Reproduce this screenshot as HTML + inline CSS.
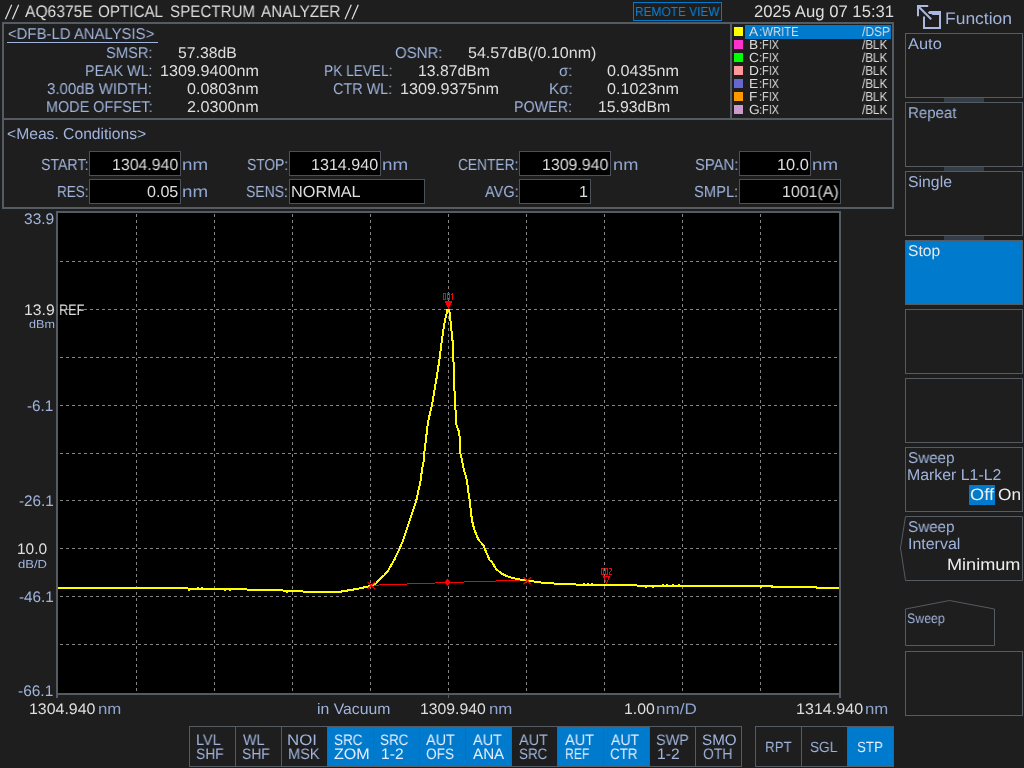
<!DOCTYPE html>
<html><head><meta charset="utf-8"><title>AQ6375E OPTICAL SPECTRUM ANALYZER</title>
<style>
html,body{margin:0;padding:0;background:#1e1e1e;}
body{width:1024px;height:768px;position:relative;overflow:hidden;font-family:"Liberation Sans",sans-serif;}
.t{will-change:transform;text-rendering:geometricPrecision;position:absolute;white-space:pre;line-height:1;transform-origin:0 0;}
.r{position:absolute;}
</style></head><body>
<div class="t" style="left:24.60px;top:4px;font-size:16.7px;color:#dedede;transform:scaleX(0.9355)">AQ6375E</div>
<div class="t" style="left:97.72px;top:4px;font-size:16.7px;color:#dedede;transform:scaleX(0.9114)">OPTICAL</div>
<div class="t" style="left:170.32px;top:4px;font-size:16.7px;color:#dedede;transform:scaleX(0.9075)">SPECTRUM</div>
<div class="t" style="left:260.80px;top:4px;font-size:16.7px;color:#dedede;transform:scaleX(0.9136)">ANALYZER</div>
<div class="r" style="left:633px;top:2px;width:89px;height:19px;border:1px solid #007acc;box-sizing:border-box;"></div>
<div class="t" style="left:635.05px;top:5px;font-size:13px;color:#0a84dc;transform:scaleX(0.9141)">REMOTE VIEW</div>
<div class="t" style="left:753.87px;top:4px;font-size:16.7px;color:#dedede;transform:scaleX(0.9970)">2025 Aug 07 15:31</div>
<div class="r" style="left:2px;top:22px;width:892px;height:187px;border:2px solid #555b63;box-sizing:border-box;"></div>
<div class="r" style="left:2px;top:118px;width:892px;height:2px;background:#555b63;"></div>
<div class="r" style="left:730px;top:22px;width:2px;height:97px;background:#555b63;"></div>
<div class="t" style="left:8.28px;top:27px;font-size:15.6px;color:#a0b4dc;transform:scaleX(0.9556)">&lt;DFB-LD ANALYSIS&gt;</div>
<div class="r" style="left:7px;top:42px;width:151px;height:1px;background:#a0b4dc;"></div>
<div class="t" style="left:105.64px;top:46px;font-size:15.6px;color:#a0b4dc;transform:scaleX(0.9420)">SMSR:</div>
<div class="t" style="left:84.66px;top:64px;font-size:15.6px;color:#a0b4dc;transform:scaleX(0.9162)">PEAK WL:</div>
<div class="t" style="left:47.18px;top:82px;font-size:15.6px;color:#a0b4dc;transform:scaleX(0.9615)">3.00dB WIDTH:</div>
<div class="t" style="left:45.55px;top:100px;font-size:15.6px;color:#a0b4dc;transform:scaleX(0.9251)">MODE OFFSET:</div>
<div class="t" style="left:178.07px;top:46px;font-size:15.6px;color:#dedede;transform:scaleX(1.0122)">57.38dB</div>
<div class="t" style="left:159.69px;top:64px;font-size:15.6px;color:#dedede;transform:scaleX(1.0366)">1309.9400nm</div>
<div class="t" style="left:187.04px;top:82px;font-size:15.6px;color:#dedede;transform:scaleX(1.0315)">0.0803nm</div>
<div class="t" style="left:186.79px;top:100px;font-size:15.6px;color:#dedede;transform:scaleX(1.0351)">2.0300nm</div>
<div class="t" style="left:394.92px;top:46px;font-size:15.6px;color:#a0b4dc;transform:scaleX(0.9621)">OSNR:</div>
<div class="t" style="left:468.16px;top:46px;font-size:15.6px;color:#dedede;transform:scaleX(1.0282)">54.57dB(/0.10nm)</div>
<div class="t" style="left:323.71px;top:64px;font-size:15.6px;color:#a0b4dc;transform:scaleX(0.8764)">PK LEVEL:</div>
<div class="t" style="left:418.42px;top:64px;font-size:15.6px;color:#dedede;transform:scaleX(1.0094)">13.87dBm</div>
<div class="t" style="left:332.88px;top:82px;font-size:15.6px;color:#a0b4dc;transform:scaleX(0.9240)">CTR WL:</div>
<div class="t" style="left:400.39px;top:82px;font-size:15.6px;color:#dedede;transform:scaleX(1.0376)">1309.9375nm</div>
<div class="t" style="left:559.40px;top:64px;font-size:15.6px;color:#a0b4dc;transform:scaleX(0.9553)">σ:</div>
<div class="t" style="left:607.03px;top:64px;font-size:15.6px;color:#dedede;transform:scaleX(1.0374)">0.0435nm</div>
<div class="t" style="left:548.98px;top:82px;font-size:15.6px;color:#a0b4dc;transform:scaleX(0.9742)">Kσ:</div>
<div class="t" style="left:607.03px;top:82px;font-size:15.6px;color:#dedede;transform:scaleX(1.0360)">0.1023nm</div>
<div class="t" style="left:513.86px;top:100px;font-size:15.6px;color:#a0b4dc;transform:scaleX(0.9162)">POWER:</div>
<div class="t" style="left:597.81px;top:100px;font-size:15.6px;color:#dedede;transform:scaleX(1.0152)">15.93dBm</div>
<div class="r" style="left:745px;top:25px;width:146px;height:14px;background:#007acc;"></div>
<div class="r" style="left:734px;top:27px;width:9px;height:9px;background:#ffff00;"></div>
<div class="t" style="left:749.20px;top:25px;font-size:13.1px;color:#dedede;transform:scaleX(1.0500)">A</div>
<div class="t" style="left:758.78px;top:25px;font-size:13.1px;color:#dedede;transform:scaleX(0.8676)">:WRITE</div>
<div class="t" style="left:862.20px;top:25px;font-size:13.1px;color:#dedede;transform:scaleX(0.9207)">/DSP</div>
<div class="r" style="left:734px;top:40px;width:9px;height:9px;background:#ff33cc;"></div>
<div class="t" style="left:748.80px;top:38px;font-size:13.1px;color:#dedede;transform:scaleX(1.0500)">B</div>
<div class="t" style="left:758.82px;top:38px;font-size:13.1px;color:#dedede;transform:scaleX(0.8320)">:FIX</div>
<div class="t" style="left:862.20px;top:38px;font-size:13.1px;color:#dedede;transform:scaleX(0.8871)">/BLK</div>
<div class="r" style="left:734px;top:53px;width:9px;height:9px;background:#00ff00;"></div>
<div class="t" style="left:748.51px;top:51px;font-size:13.1px;color:#dedede;transform:scaleX(1.0500)">C</div>
<div class="t" style="left:758.82px;top:51px;font-size:13.1px;color:#dedede;transform:scaleX(0.8320)">:FIX</div>
<div class="t" style="left:862.20px;top:51px;font-size:13.1px;color:#dedede;transform:scaleX(0.8871)">/BLK</div>
<div class="r" style="left:734px;top:66px;width:9px;height:9px;background:#ff9999;"></div>
<div class="t" style="left:748.80px;top:64px;font-size:13.1px;color:#dedede;transform:scaleX(1.0500)">D</div>
<div class="t" style="left:758.82px;top:64px;font-size:13.1px;color:#dedede;transform:scaleX(0.8320)">:FIX</div>
<div class="t" style="left:862.20px;top:64px;font-size:13.1px;color:#dedede;transform:scaleX(0.8871)">/BLK</div>
<div class="r" style="left:734px;top:79px;width:9px;height:9px;background:#6666cc;"></div>
<div class="t" style="left:748.80px;top:77px;font-size:13.1px;color:#dedede;transform:scaleX(1.0500)">E</div>
<div class="t" style="left:758.82px;top:77px;font-size:13.1px;color:#dedede;transform:scaleX(0.8320)">:FIX</div>
<div class="t" style="left:862.20px;top:77px;font-size:13.1px;color:#dedede;transform:scaleX(0.8871)">/BLK</div>
<div class="r" style="left:734px;top:92px;width:9px;height:9px;background:#ff9900;"></div>
<div class="t" style="left:748.80px;top:90px;font-size:13.1px;color:#dedede;transform:scaleX(1.0500)">F</div>
<div class="t" style="left:758.82px;top:90px;font-size:13.1px;color:#dedede;transform:scaleX(0.8320)">:FIX</div>
<div class="t" style="left:862.20px;top:90px;font-size:13.1px;color:#dedede;transform:scaleX(0.8871)">/BLK</div>
<div class="r" style="left:734px;top:105px;width:9px;height:9px;background:#cc99cc;"></div>
<div class="t" style="left:748.51px;top:103px;font-size:13.1px;color:#dedede;transform:scaleX(1.0500)">G</div>
<div class="t" style="left:758.82px;top:103px;font-size:13.1px;color:#dedede;transform:scaleX(0.8320)">:FIX</div>
<div class="t" style="left:862.20px;top:103px;font-size:13.1px;color:#dedede;transform:scaleX(0.8871)">/BLK</div>
<div class="t" style="left:7.30px;top:127px;font-size:15.6px;color:#a0b4dc;transform:scaleX(1.0039)">&lt;Meas. Conditions&gt;</div>
<div class="r" style="left:89px;top:151px;width:92px;height:25px;background:#000;border:1px solid #4b5158;box-sizing:border-box;"></div>
<div class="r" style="left:89px;top:179px;width:92px;height:25px;background:#000;border:1px solid #4b5158;box-sizing:border-box;"></div>
<div class="r" style="left:289px;top:151px;width:92px;height:25px;background:#000;border:1px solid #4b5158;box-sizing:border-box;"></div>
<div class="r" style="left:289px;top:179px;width:136px;height:25px;background:#000;border:1px solid #4b5158;box-sizing:border-box;"></div>
<div class="r" style="left:519px;top:151px;width:92px;height:25px;background:#000;border:1px solid #4b5158;box-sizing:border-box;"></div>
<div class="r" style="left:519px;top:179px;width:72px;height:25px;background:#000;border:1px solid #4b5158;box-sizing:border-box;"></div>
<div class="r" style="left:739px;top:151px;width:72px;height:25px;background:#000;border:1px solid #4b5158;box-sizing:border-box;"></div>
<div class="r" style="left:739px;top:179px;width:102px;height:25px;background:#000;border:1px solid #4b5158;box-sizing:border-box;"></div>
<div class="t" style="left:40.96px;top:157px;font-size:16.1px;color:#a0b4dc;transform:scaleX(0.8796)">START:</div>
<div class="t" style="left:56.71px;top:184px;font-size:16.1px;color:#a0b4dc;transform:scaleX(0.8435)">RES:</div>
<div class="t" style="left:111.91px;top:157px;font-size:16.1px;color:#dedede;transform:scaleX(0.9868)">1304.940</div>
<div class="t" style="left:147.14px;top:184px;font-size:16.1px;color:#dedede;transform:scaleX(0.9931)">0.05</div>
<div class="t" style="left:182.18px;top:157px;font-size:16.1px;color:#8fa4d0;transform:scaleX(1.1683)">nm</div>
<div class="t" style="left:182.18px;top:184px;font-size:16.1px;color:#8fa4d0;transform:scaleX(1.1683)">nm</div>
<div class="t" style="left:246.98px;top:157px;font-size:16.1px;color:#a0b4dc;transform:scaleX(0.8565)">STOP:</div>
<div class="t" style="left:246.17px;top:184px;font-size:16.1px;color:#a0b4dc;transform:scaleX(0.8678)">SENS:</div>
<div class="t" style="left:311.19px;top:157px;font-size:16.1px;color:#dedede;transform:scaleX(0.9990)">1314.940</div>
<div class="t" style="left:382.27px;top:157px;font-size:16.1px;color:#8fa4d0;transform:scaleX(1.1732)">nm</div>
<div class="t" style="left:291.40px;top:184px;font-size:16.1px;color:#dedede;transform:scaleX(1.0111)">NORMAL</div>
<div class="t" style="left:458.11px;top:157px;font-size:16.1px;color:#a0b4dc;transform:scaleX(0.8550)">CENTER:</div>
<div class="t" style="left:484.80px;top:184px;font-size:16.1px;color:#a0b4dc;transform:scaleX(0.9052)">AVG:</div>
<div class="t" style="left:541.51px;top:157px;font-size:16.1px;color:#dedede;transform:scaleX(0.9883)">1309.940</div>
<div class="t" style="left:612.61px;top:157px;font-size:16.1px;color:#8fa4d0;transform:scaleX(1.1338)">nm</div>
<div class="t" style="left:578.50px;top:184px;font-size:16.1px;color:#dedede;transform:scaleX(0.9500)">1</div>
<div class="t" style="left:695.13px;top:157px;font-size:16.1px;color:#a0b4dc;transform:scaleX(0.9200)">SPAN:</div>
<div class="t" style="left:694.24px;top:184px;font-size:16.1px;color:#a0b4dc;transform:scaleX(0.9154)">SMPL:</div>
<div class="t" style="left:777.37px;top:157px;font-size:16.1px;color:#dedede;transform:scaleX(1.0188)">10.0</div>
<div class="t" style="left:812.48px;top:157px;font-size:16.1px;color:#8fa4d0;transform:scaleX(1.1634)">nm</div>
<div class="t" style="left:781.61px;top:184px;font-size:16.1px;color:#dedede;transform:scaleX(0.9883)">1001(A)</div>
<svg class="r" style="left:0;top:0" width="1024" height="768" viewBox="0 0 1024 768" shape-rendering="crispEdges">
<rect x="56" y="211" width="785" height="484" fill="#555b63"/>
<rect x="58" y="213" width="781" height="480" fill="#000"/>
<rect x="56" y="695" width="2" height="3" fill="#555b63"/>
<rect x="839" y="695" width="2" height="3" fill="#555b63"/>
<rect x="448" y="695" width="1" height="3" fill="#555b63"/>
<line x1="60" y1="261.5" x2="839" y2="261.5" stroke="#858585" stroke-width="1" stroke-dasharray="3 3"/>
<line x1="60" y1="309.5" x2="839" y2="309.5" stroke="#858585" stroke-width="1" stroke-dasharray="3 3"/>
<line x1="60" y1="357.5" x2="839" y2="357.5" stroke="#858585" stroke-width="1" stroke-dasharray="3 3"/>
<line x1="60" y1="405.5" x2="839" y2="405.5" stroke="#858585" stroke-width="1" stroke-dasharray="3 3"/>
<line x1="60" y1="453.5" x2="839" y2="453.5" stroke="#858585" stroke-width="1" stroke-dasharray="3 3"/>
<line x1="60" y1="500.5" x2="839" y2="500.5" stroke="#858585" stroke-width="1" stroke-dasharray="3 3"/>
<line x1="60" y1="548.5" x2="839" y2="548.5" stroke="#858585" stroke-width="1" stroke-dasharray="3 3"/>
<line x1="60" y1="596.5" x2="839" y2="596.5" stroke="#858585" stroke-width="1" stroke-dasharray="3 3"/>
<line x1="60" y1="644.5" x2="839" y2="644.5" stroke="#858585" stroke-width="1" stroke-dasharray="3 3"/>
<line x1="136.5" y1="214" x2="136.5" y2="693" stroke="#858585" stroke-width="1" stroke-dasharray="3 3"/>
<line x1="214.5" y1="214" x2="214.5" y2="693" stroke="#858585" stroke-width="1" stroke-dasharray="3 3"/>
<line x1="292.5" y1="214" x2="292.5" y2="693" stroke="#858585" stroke-width="1" stroke-dasharray="3 3"/>
<line x1="370.5" y1="214" x2="370.5" y2="693" stroke="#858585" stroke-width="1" stroke-dasharray="3 3"/>
<line x1="448.5" y1="214" x2="448.5" y2="693" stroke="#858585" stroke-width="1" stroke-dasharray="3 3"/>
<line x1="526.5" y1="214" x2="526.5" y2="693" stroke="#858585" stroke-width="1" stroke-dasharray="3 3"/>
<line x1="604.5" y1="214" x2="604.5" y2="693" stroke="#858585" stroke-width="1" stroke-dasharray="3 3"/>
<line x1="682.5" y1="214" x2="682.5" y2="693" stroke="#858585" stroke-width="1" stroke-dasharray="3 3"/>
<line x1="760.5" y1="214" x2="760.5" y2="693" stroke="#858585" stroke-width="1" stroke-dasharray="3 3"/>
<rect x="371" y="585" width="8" height="1" fill="#ff0000"/>
<rect x="379" y="584" width="28" height="1" fill="#ff0000"/>
<rect x="407" y="583" width="28" height="1" fill="#ff0000"/>
<rect x="435" y="582" width="29" height="1" fill="#ff0000"/>
<rect x="464" y="581" width="32" height="1" fill="#ff0000"/>
<rect x="496" y="580" width="31" height="1" fill="#ff0000"/>
<polyline points="58,588 187,588 189,589 240,589.4 282,590 284,591 302,591.4 306,592 338,592 345,591 350,590 355,589.3 360,588.3 364,587.4 368,586.5 372,585.3 376,583.5 379.3,580 385,574.5 388.5,570 394.2,560 399.7,548.5 403.3,540 409.8,520 416.3,500.5 420.8,480 421.9,470 423.9,460 424.3,453 428,422 432,405 434.5,390 436.3,380 437.8,370 439.8,357.5 440.6,350 441.9,340 443.3,330 445.1,320 447.4,309.7 449.2,309.7 450.4,320 451.9,335 453,345 453.9,375 454.1,390 454.7,392 455.4,408 456.4,425 459.1,432 460,440 460.3,453 462,460 464,470 466.9,480 468.1,490 469.7,500.5 470.8,510 471.9,520 474.4,530 478.6,540 483.3,545 485.3,550 489.5,560 492,562 495.9,568.8 501.7,573.7 509.5,577.2 517.3,579.1 527.1,580.5 540.8,582.5 558.4,583.8 583.75,584.8 607.2,585.2 646.25,585.6 760,585.6 775,586.8 815,586.8 817,587.8 839,587.8" fill="none" stroke="#ffff00" stroke-width="2" stroke-linejoin="round"/>
<rect x="197" y="587" width="2" height="1" fill="#ffff00"/>
<rect x="201" y="587" width="2" height="1" fill="#ffff00"/>
<rect x="224" y="590" width="2" height="1" fill="#ffff00"/>
<rect x="229" y="590" width="2" height="1" fill="#ffff00"/>
<rect x="583" y="583" width="2" height="1" fill="#ffff00"/>
<rect x="587" y="583" width="2" height="1" fill="#ffff00"/>
<rect x="591" y="583" width="2" height="1" fill="#ffff00"/>
<rect x="662" y="584" width="2" height="1" fill="#ffff00"/>
<rect x="666" y="584" width="2" height="1" fill="#ffff00"/>
<rect x="672" y="584" width="2" height="1" fill="#ffff00"/>
<rect x="678" y="584" width="2" height="1" fill="#ffff00"/>
<rect x="766" y="585" width="2" height="1" fill="#ffff00"/>
<rect x="771" y="585" width="2" height="1" fill="#ffff00"/>
<rect x="188" y="590" width="2" height="1" fill="#ffff00"/>
<rect x="286" y="592" width="2" height="1" fill="#ffff00"/>
<rect x="645" y="587" width="2" height="1" fill="#ffff00"/>
<rect x="652" y="587" width="2" height="1" fill="#ffff00"/>
<rect x="760" y="587" width="2" height="1" fill="#ffff00"/>
<path d="M367.5,582.0 L375,589.0 M367.5,589.0 L375,582.0" stroke="#ff0000" stroke-width="1.2" fill="none" shape-rendering="auto"/>
<path d="M523.5,577.2 L531,584.2 M523.5,584.2 L531,577.2" stroke="#ff0000" stroke-width="1.2" fill="none" shape-rendering="auto"/>
<path d="M447.5,578.6 L450.6,582.3 L447.5,586 L444.4,582.3 Z" fill="#ff0000" shape-rendering="auto"/>
<rect x="443" y="293" width="1" height="1" fill="#ff0000"/>
<rect x="444" y="293" width="1" height="1" fill="#ff0000"/>
<rect x="445" y="293" width="1" height="1" fill="#ff0000"/>
<rect x="443" y="294" width="1" height="1" fill="#ff0000"/>
<rect x="445" y="294" width="1" height="1" fill="#ff0000"/>
<rect x="443" y="295" width="1" height="1" fill="#ff0000"/>
<rect x="445" y="295" width="1" height="1" fill="#ff0000"/>
<rect x="443" y="296" width="1" height="1" fill="#ff0000"/>
<rect x="445" y="296" width="1" height="1" fill="#ff0000"/>
<rect x="443" y="297" width="1" height="1" fill="#ff0000"/>
<rect x="445" y="297" width="1" height="1" fill="#ff0000"/>
<rect x="443" y="298" width="1" height="1" fill="#ff0000"/>
<rect x="445" y="298" width="1" height="1" fill="#ff0000"/>
<rect x="443" y="299" width="1" height="1" fill="#ff0000"/>
<rect x="444" y="299" width="1" height="1" fill="#ff0000"/>
<rect x="445" y="299" width="1" height="1" fill="#ff0000"/>
<rect x="447" y="293" width="1" height="1" fill="#ff0000"/>
<rect x="448" y="293" width="1" height="1" fill="#ff0000"/>
<rect x="449" y="293" width="1" height="1" fill="#ff0000"/>
<rect x="447" y="294" width="1" height="1" fill="#ff0000"/>
<rect x="449" y="294" width="1" height="1" fill="#ff0000"/>
<rect x="447" y="295" width="1" height="1" fill="#ff0000"/>
<rect x="449" y="295" width="1" height="1" fill="#ff0000"/>
<rect x="447" y="296" width="1" height="1" fill="#ff0000"/>
<rect x="449" y="296" width="1" height="1" fill="#ff0000"/>
<rect x="447" y="297" width="1" height="1" fill="#ff0000"/>
<rect x="449" y="297" width="1" height="1" fill="#ff0000"/>
<rect x="447" y="298" width="1" height="1" fill="#ff0000"/>
<rect x="449" y="298" width="1" height="1" fill="#ff0000"/>
<rect x="447" y="299" width="1" height="1" fill="#ff0000"/>
<rect x="448" y="299" width="1" height="1" fill="#ff0000"/>
<rect x="449" y="299" width="1" height="1" fill="#ff0000"/>
<rect x="452" y="293" width="1" height="1" fill="#ff0000"/>
<rect x="451" y="294" width="1" height="1" fill="#ff0000"/>
<rect x="452" y="294" width="1" height="1" fill="#ff0000"/>
<rect x="452" y="295" width="1" height="1" fill="#ff0000"/>
<rect x="452" y="296" width="1" height="1" fill="#ff0000"/>
<rect x="452" y="297" width="1" height="1" fill="#ff0000"/>
<rect x="452" y="298" width="1" height="1" fill="#ff0000"/>
<rect x="452" y="299" width="1" height="1" fill="#ff0000"/>
<rect x="601" y="568" width="1" height="1" fill="#ff0000"/>
<rect x="602" y="568" width="1" height="1" fill="#ff0000"/>
<rect x="603" y="568" width="1" height="1" fill="#ff0000"/>
<rect x="601" y="569" width="1" height="1" fill="#ff0000"/>
<rect x="603" y="569" width="1" height="1" fill="#ff0000"/>
<rect x="601" y="570" width="1" height="1" fill="#ff0000"/>
<rect x="603" y="570" width="1" height="1" fill="#ff0000"/>
<rect x="601" y="571" width="1" height="1" fill="#ff0000"/>
<rect x="603" y="571" width="1" height="1" fill="#ff0000"/>
<rect x="601" y="572" width="1" height="1" fill="#ff0000"/>
<rect x="603" y="572" width="1" height="1" fill="#ff0000"/>
<rect x="601" y="573" width="1" height="1" fill="#ff0000"/>
<rect x="603" y="573" width="1" height="1" fill="#ff0000"/>
<rect x="601" y="574" width="1" height="1" fill="#ff0000"/>
<rect x="602" y="574" width="1" height="1" fill="#ff0000"/>
<rect x="603" y="574" width="1" height="1" fill="#ff0000"/>
<rect x="605" y="568" width="1" height="1" fill="#ff0000"/>
<rect x="606" y="568" width="1" height="1" fill="#ff0000"/>
<rect x="607" y="568" width="1" height="1" fill="#ff0000"/>
<rect x="605" y="569" width="1" height="1" fill="#ff0000"/>
<rect x="607" y="569" width="1" height="1" fill="#ff0000"/>
<rect x="605" y="570" width="1" height="1" fill="#ff0000"/>
<rect x="607" y="570" width="1" height="1" fill="#ff0000"/>
<rect x="605" y="571" width="1" height="1" fill="#ff0000"/>
<rect x="607" y="571" width="1" height="1" fill="#ff0000"/>
<rect x="605" y="572" width="1" height="1" fill="#ff0000"/>
<rect x="607" y="572" width="1" height="1" fill="#ff0000"/>
<rect x="605" y="573" width="1" height="1" fill="#ff0000"/>
<rect x="607" y="573" width="1" height="1" fill="#ff0000"/>
<rect x="605" y="574" width="1" height="1" fill="#ff0000"/>
<rect x="606" y="574" width="1" height="1" fill="#ff0000"/>
<rect x="607" y="574" width="1" height="1" fill="#ff0000"/>
<rect x="609" y="568" width="1" height="1" fill="#ff0000"/>
<rect x="610" y="568" width="1" height="1" fill="#ff0000"/>
<rect x="611" y="568" width="1" height="1" fill="#ff0000"/>
<rect x="611" y="569" width="1" height="1" fill="#ff0000"/>
<rect x="611" y="570" width="1" height="1" fill="#ff0000"/>
<rect x="610" y="571" width="1" height="1" fill="#ff0000"/>
<rect x="609" y="572" width="1" height="1" fill="#ff0000"/>
<rect x="609" y="573" width="1" height="1" fill="#ff0000"/>
<rect x="609" y="574" width="1" height="1" fill="#ff0000"/>
<rect x="610" y="574" width="1" height="1" fill="#ff0000"/>
<rect x="611" y="574" width="1" height="1" fill="#ff0000"/>
<path d="M444.5,301 L452.5,301 L448.5,309 Z" fill="#ff0000"/>
<path d="M603.5,576.5 L609.5,576.5 L606.5,583 Z" fill="none" stroke="#ff0000" stroke-width="1"/>
</svg>
<div class="t" style="left:24.26px;top:212px;font-size:15.3px;color:#a0b4dc;transform:scaleX(1.0163)">33.9</div>
<div class="t" style="left:23.92px;top:303px;font-size:15.3px;color:#dedede;transform:scaleX(1.0314)">13.9</div>
<div class="t" style="left:58.99px;top:303px;font-size:15.3px;color:#dedede;transform:scaleX(0.8287)">REF</div>
<div class="t" style="left:29.00px;top:320px;font-size:11.5px;color:#a0b4dc;transform:scaleX(1.0942)">dBm</div>
<div class="t" style="left:27.40px;top:399px;font-size:15.3px;color:#a0b4dc;transform:scaleX(0.9834)">-6.1</div>
<div class="t" style="left:18.59px;top:494px;font-size:15.3px;color:#a0b4dc;transform:scaleX(0.9975)">-26.1</div>
<div class="t" style="left:17.34px;top:542px;font-size:15.3px;color:#dedede;transform:scaleX(1.0116)">10.0</div>
<div class="t" style="left:17.98px;top:560px;font-size:11.5px;color:#a0b4dc;transform:scaleX(1.1363)">dB/D</div>
<div class="t" style="left:18.59px;top:590px;font-size:15.3px;color:#a0b4dc;transform:scaleX(0.9975)">-46.1</div>
<div class="t" style="left:18.33px;top:684px;font-size:15.3px;color:#a0b4dc;transform:scaleX(1.0109)">-66.1</div>
<div class="t" style="left:29.00px;top:702px;font-size:15.3px;color:#dedede;transform:scaleX(1.0416)">1304.940</div>
<div class="t" style="left:97.86px;top:702px;font-size:15.3px;color:#8fa4d0;transform:scaleX(1.0997)">nm</div>
<div class="t" style="left:316.77px;top:702px;font-size:15.3px;color:#a0b4dc;transform:scaleX(1.0313)">in Vacuum</div>
<div class="t" style="left:420.12px;top:702px;font-size:15.3px;color:#dedede;transform:scaleX(1.0319)">1309.940</div>
<div class="t" style="left:488.61px;top:702px;font-size:15.3px;color:#8fa4d0;transform:scaleX(1.0997)">nm</div>
<div class="t" style="left:624.01px;top:702px;font-size:15.3px;color:#dedede;transform:scaleX(1.0329)">1.00</div>
<div class="t" style="left:656.49px;top:702px;font-size:15.3px;color:#8fa4d0;transform:scaleX(1.1147)">nm/D</div>
<div class="t" style="left:795.89px;top:702px;font-size:15.3px;color:#dedede;transform:scaleX(1.0512)">1314.940</div>
<div class="t" style="left:865.11px;top:702px;font-size:15.3px;color:#8fa4d0;transform:scaleX(1.0945)">nm</div>
<div class="r" style="left:189px;top:726px;width:553px;height:41px;border:1px solid #555b63;box-sizing:border-box;"></div>
<div class="t" style="left:195.64px;top:733px;font-size:15.2px;color:#a0b4dc;transform:scaleX(0.9569)">LVL</div>
<div class="t" style="left:196.18px;top:747px;font-size:15.2px;color:#a0b4dc;transform:scaleX(0.9115)">SHF</div>
<div class="r" style="left:235px;top:726px;width:1px;height:41px;background:#555b63;"></div>
<div class="t" style="left:242.80px;top:733px;font-size:15.2px;color:#a0b4dc;transform:scaleX(0.9488)">WL</div>
<div class="t" style="left:242.17px;top:747px;font-size:15.2px;color:#a0b4dc;transform:scaleX(0.9149)">SHF</div>
<div class="r" style="left:281px;top:726px;width:1px;height:41px;background:#555b63;"></div>
<div class="t" style="left:287.15px;top:733px;font-size:15.2px;color:#a0b4dc;transform:scaleX(1.1074)">NOI</div>
<div class="t" style="left:288.43px;top:747px;font-size:15.2px;color:#a0b4dc;transform:scaleX(0.9584)">MSK</div>
<div class="r" style="left:328px;top:727px;width:45px;height:39px;background:#007acc;"></div>
<div class="r" style="left:327px;top:726px;width:1px;height:41px;background:#555b63;"></div>
<div class="t" style="left:334.19px;top:733px;font-size:15.2px;color:#e6eefc;transform:scaleX(0.8864)">SRC</div>
<div class="t" style="left:333.82px;top:747px;font-size:15.2px;color:#e6eefc;transform:scaleX(1.0607)">ZOM</div>
<div class="r" style="left:374px;top:727px;width:45px;height:39px;background:#007acc;"></div>
<div class="r" style="left:373px;top:726px;width:1px;height:41px;background:#555b63;"></div>
<div class="t" style="left:380.29px;top:733px;font-size:15.2px;color:#e6eefc;transform:scaleX(0.8848)">SRC</div>
<div class="t" style="left:380.93px;top:747px;font-size:15.2px;color:#e6eefc;transform:scaleX(1.0278)">1-2</div>
<div class="r" style="left:420px;top:727px;width:45px;height:39px;background:#007acc;"></div>
<div class="r" style="left:419px;top:726px;width:1px;height:41px;background:#555b63;"></div>
<div class="t" style="left:426.20px;top:733px;font-size:15.2px;color:#e6eefc;transform:scaleX(0.9503)">AUT</div>
<div class="t" style="left:426.38px;top:747px;font-size:15.2px;color:#e6eefc;transform:scaleX(0.9017)">OFS</div>
<div class="r" style="left:466px;top:727px;width:45px;height:39px;background:#007acc;"></div>
<div class="r" style="left:465px;top:726px;width:1px;height:41px;background:#555b63;"></div>
<div class="t" style="left:472.80px;top:733px;font-size:15.2px;color:#e6eefc;transform:scaleX(0.9503)">AUT</div>
<div class="t" style="left:472.80px;top:747px;font-size:15.2px;color:#e6eefc;transform:scaleX(0.9892)">ANA</div>
<div class="r" style="left:511px;top:726px;width:1px;height:41px;background:#555b63;"></div>
<div class="t" style="left:518.60px;top:733px;font-size:15.2px;color:#a0b4dc;transform:scaleX(0.9503)">AUT</div>
<div class="t" style="left:518.60px;top:747px;font-size:15.2px;color:#a0b4dc;transform:scaleX(0.8815)">SRC</div>
<div class="r" style="left:558px;top:727px;width:45px;height:39px;background:#007acc;"></div>
<div class="r" style="left:557px;top:726px;width:1px;height:41px;background:#555b63;"></div>
<div class="t" style="left:564.50px;top:733px;font-size:15.2px;color:#e6eefc;transform:scaleX(0.9569)">AUT</div>
<div class="t" style="left:564.82px;top:747px;font-size:15.2px;color:#e6eefc;transform:scaleX(0.8062)">REF</div>
<div class="r" style="left:604px;top:727px;width:45px;height:39px;background:#007acc;"></div>
<div class="r" style="left:603px;top:726px;width:1px;height:41px;background:#555b63;"></div>
<div class="t" style="left:610.80px;top:733px;font-size:15.2px;color:#e6eefc;transform:scaleX(0.9254)">AUT</div>
<div class="t" style="left:610.43px;top:747px;font-size:15.2px;color:#e6eefc;transform:scaleX(0.8805)">CTR</div>
<div class="r" style="left:649px;top:726px;width:1px;height:41px;background:#555b63;"></div>
<div class="t" style="left:656.15px;top:733px;font-size:15.2px;color:#a0b4dc;transform:scaleX(0.9476)">SWP</div>
<div class="t" style="left:656.82px;top:747px;font-size:15.2px;color:#a0b4dc;transform:scaleX(1.0328)">1-2</div>
<div class="r" style="left:695px;top:726px;width:1px;height:41px;background:#555b63;"></div>
<div class="t" style="left:702.32px;top:733px;font-size:15.2px;color:#a0b4dc;transform:scaleX(0.9981)">SMO</div>
<div class="t" style="left:702.67px;top:747px;font-size:15.2px;color:#a0b4dc;transform:scaleX(0.9207)">OTH</div>
<div class="r" style="left:755px;top:726px;width:139px;height:41px;border:1px solid #555b63;box-sizing:border-box;"></div>
<div class="r" style="left:801px;top:726px;width:1px;height:41px;background:#555b63;"></div>
<div class="r" style="left:847px;top:726px;width:1px;height:41px;background:#555b63;"></div>
<div class="r" style="left:848px;top:727px;width:45px;height:39px;background:#007acc;"></div>
<div class="t" style="left:764.63px;top:741px;font-size:14.8px;color:#a0b4dc;transform:scaleX(0.9050)">RPT</div>
<div class="t" style="left:810.19px;top:741px;font-size:14.8px;color:#a0b4dc;transform:scaleX(0.9231)">SGL</div>
<div class="t" style="left:857.10px;top:741px;font-size:14.8px;color:#e6eefc;transform:scaleX(0.9021)">STP</div>
<svg class="r" style="left:0;top:0" width="1024" height="768" viewBox="0 0 1024 768">
<path d="M924,16.5 L924,28 L940,28 L940,13 L928,13" fill="none" stroke="#a9b9df" stroke-width="2"/>
<path d="M928.5,11 L941,11 L941,15 L932.5,15 Z" fill="#a9b9df"/>
<path d="M5.4,19.2 L11.7,4.8" fill="none" stroke="#dedede" stroke-width="1.25"/>
<path d="M12.4,19.2 L18.7,4.8" fill="none" stroke="#dedede" stroke-width="1.25"/>
<path d="M345.0,19.2 L351.3,4.8" fill="none" stroke="#dedede" stroke-width="1.25"/>
<path d="M352.0,19.2 L358.3,4.8" fill="none" stroke="#dedede" stroke-width="1.25"/>
<path d="M922.5,10.5 L931.3,19.3" fill="none" stroke="#1e1e1e" stroke-width="4.6"/>
<path d="M918,16.2 L918,6 L928.2,6" fill="none" stroke="#a9b9df" stroke-width="2"/>
<path d="M918,6 L931.2,19.2" fill="none" stroke="#a9b9df" stroke-width="2"/>
</svg>
<div class="t" style="left:945.20px;top:11px;font-size:16.6px;color:#a0b4dc;transform:scaleX(1.0532)">Function</div>
<div class="r" style="left:905px;top:33px;width:118px;height:65px;border:1px solid #555b63;box-sizing:border-box;"></div>
<div class="r" style="left:905px;top:102px;width:118px;height:65px;border:1px solid #555b63;box-sizing:border-box;"></div>
<div class="r" style="left:905px;top:171px;width:118px;height:65px;border:1px solid #555b63;box-sizing:border-box;"></div>
<div class="r" style="left:905px;top:240px;width:118px;height:65px;background:#007acc;border:1px solid #555b63;box-sizing:border-box;"></div>
<div class="r" style="left:905px;top:309px;width:118px;height:65px;border:1px solid #555b63;box-sizing:border-box;"></div>
<div class="r" style="left:905px;top:378px;width:118px;height:65px;border:1px solid #555b63;box-sizing:border-box;"></div>
<div class="r" style="left:905px;top:447px;width:118px;height:65px;border:1px solid #555b63;box-sizing:border-box;"></div>
<div class="r" style="left:944px;top:98px;width:40px;height:4px;background:#343e48;"></div>
<div class="r" style="left:944px;top:167px;width:40px;height:4px;background:#343e48;"></div>
<div class="r" style="left:944px;top:236px;width:40px;height:4px;background:#343e48;"></div>
<div class="t" style="left:907.90px;top:37px;font-size:15.6px;color:#a0b4dc;transform:scaleX(1.0530)">Auto</div>
<div class="t" style="left:907.60px;top:106px;font-size:15.6px;color:#a0b4dc;transform:scaleX(0.9636)">Repeat</div>
<div class="t" style="left:907.89px;top:175px;font-size:15.6px;color:#a0b4dc;transform:scaleX(1.0133)">Single</div>
<div class="t" style="left:907.91px;top:244px;font-size:15.6px;color:#e8e8e8;transform:scaleX(0.9892)">Stop</div>
<div class="t" style="left:908.02px;top:451px;font-size:15.6px;color:#a0b4dc;transform:scaleX(0.9756)">Sweep</div>
<div class="t" style="left:907.43px;top:468px;font-size:15.6px;color:#a0b4dc;transform:scaleX(1.0177)">Marker L1-L2</div>
<div class="r" style="left:969px;top:485px;width:26px;height:20px;background:#007acc;"></div>
<div class="t" style="left:969.88px;top:487px;font-size:16.5px;color:#eeeeee;transform:scaleX(1.1028)">Off</div>
<div class="t" style="left:997.82px;top:487px;font-size:16.5px;color:#eeeeee;transform:scaleX(1.0446)">On</div>
<svg class="r" style="left:0;top:0" width="1024" height="768" viewBox="0 0 1024 768">
<path d="M905.5,516.5 L1022.5,516.5 L1022.5,580.5 L905.5,580.5 L900.5,548 Z" fill="none" stroke="#555b63" stroke-width="1"/>
<path d="M905.5,609 L949.5,600.5 L994.5,609 L994.5,645.5 L905.5,645.5 Z" fill="none" stroke="#555b63" stroke-width="1"/>
</svg>
<div class="t" style="left:908.02px;top:520px;font-size:15.6px;color:#a0b4dc;transform:scaleX(0.9756)">Sweep</div>
<div class="t" style="left:907.76px;top:537px;font-size:15.6px;color:#a0b4dc;transform:scaleX(1.0236)">Interval</div>
<div class="t" style="left:947.45px;top:557px;font-size:16.5px;color:#eeeeee;transform:scaleX(1.0976)">Minimum</div>
<div class="t" style="left:906.94px;top:612px;font-size:13.8px;color:#a0b4dc;transform:scaleX(0.8954)">Sweep</div>
<div class="r" style="left:905px;top:651px;width:118px;height:65px;border:1px solid #555b63;box-sizing:border-box;"></div>
</body></html>
